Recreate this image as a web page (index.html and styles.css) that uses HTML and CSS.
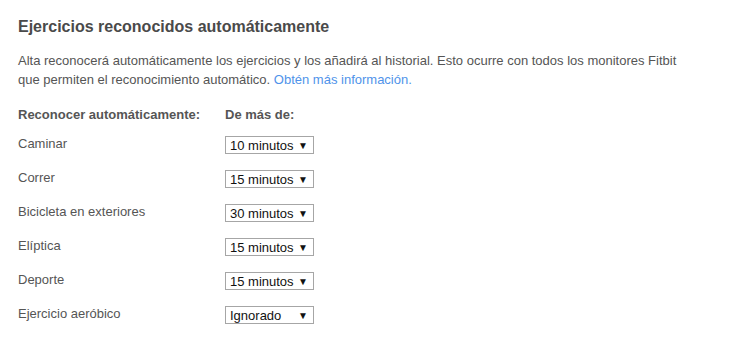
FILE: index.html
```html
<!DOCTYPE html>
<html>
<head>
  <meta charset="UTF-8">
  <link rel="stylesheet" href="styles.css">
</head>
<body>
  <div class="autorecognize">
    <div class="section-title">Ejercicios reconocidos automáticamente</div>
    <p class="section-desc">Alta reconocerá automáticamente los ejercicios y los añadirá al historial. Esto ocurre con todos los monitores Fitbit que permiten el reconocimiento automático. <a href="#">Obtén más información.</a></p>

    <div class="exercise-table">
      <div class="col-head">Reconocer automáticamente:</div>
      <div class="col-head">De más de:</div>

      <div class="exercise-name">Caminar</div>
      <div class="exercise-time"><span class="fake-select">10 minutos<span class="arrow">▼</span></span></div>

      <div class="exercise-name">Correr</div>
      <div class="exercise-time"><span class="fake-select">15 minutos<span class="arrow">▼</span></span></div>

      <div class="exercise-name">Bicicleta en exteriores</div>
      <div class="exercise-time"><span class="fake-select">30 minutos<span class="arrow">▼</span></span></div>

      <div class="exercise-name">Elíptica</div>
      <div class="exercise-time"><span class="fake-select">15 minutos<span class="arrow">▼</span></span></div>

      <div class="exercise-name">Deporte</div>
      <div class="exercise-time"><span class="fake-select">15 minutos<span class="arrow">▼</span></span></div>

      <div class="exercise-name">Ejercicio aeróbico</div>
      <div class="exercise-time"><span class="fake-select">Ignorado<span class="arrow">▼</span></span></div>
    </div>
  </div>
</body>
</html>
```

FILE: styles.css
```css
body {
  margin: 0;
  background-color: #fff;
  font-family: "Liberation Sans", Arial, sans-serif;
  color: #555;
}

.autorecognize {
  padding: 17px 18px 0;
}
.section-title {
  font-size: 16px;
  font-weight: bold;
  color: #4a4a4a;
  line-height: 20px;
}
.section-desc {
  font-size: 13px;
  line-height: 19px;
  margin: 14px 0 0;
  width: 670px;
}
.section-desc a {
  color: #4f93ea;
  text-decoration: none;
}

.exercise-table {
  display: grid;
  grid-template-columns: 207px auto;
  margin-top: 16px;
  font-size: 13px;
}
.col-head {
  font-weight: bold;
  line-height: 20px;
  height: 30px;
}
.exercise-name {
  height: 34px;
  line-height: 18px;
}
.exercise-time {
  box-sizing: border-box;
  height: 34px;
  padding-top: 1px;
}
.fake-select {
  display: inline-flex;
  align-items: center;
  justify-content: space-between;
  box-sizing: border-box;
  width: 89px;
  height: 18px;
  padding: 0 5px 0 4px;
  border: 1px solid #a6a6a6;
  background-color: #fff;
  color: #111;
  font-size: 13px;
}
.arrow {
  font-size: 10px;
}
```
